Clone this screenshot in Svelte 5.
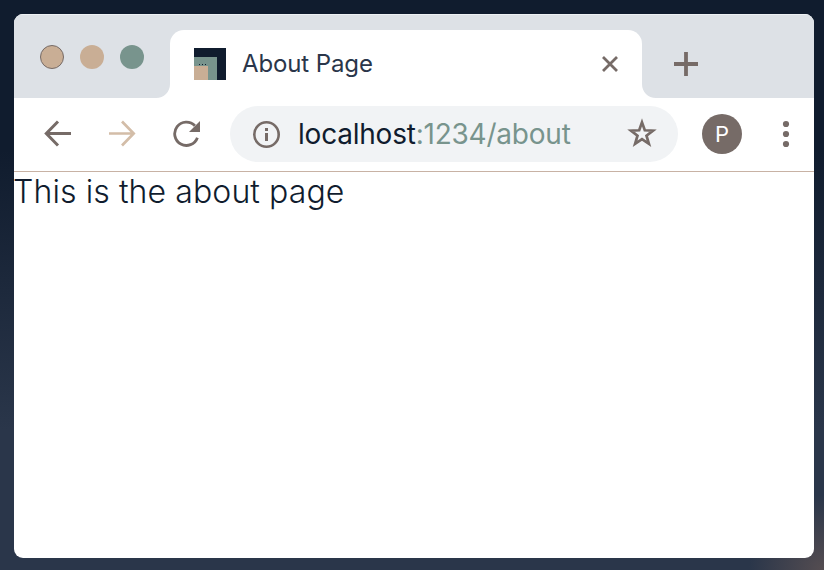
<script>
  const lights = ['close', 'minimize', 'zoom'];
</script>

<main class="desktop">
  <section class="window">
    <header class="strip">
      <div class="lights">
        {#each lights as light}
          <span class="light {light}"></span>
        {/each}
      </div>
      <div class="tab">
        <svg class="curve" width="14" height="14" viewBox="0 0 14 14"><path d="M14 0v14H0C8 14 14 8 14 0z" fill="#fff" /></svg>
        <svg class="favicon" width="32" height="32" viewBox="0 0 32 32" shape-rendering="crispEdges">
          <path d="M0 0h32v32H0z" fill="#101c2e" />
          <path d="M0 9h23v23H0z" fill="#78948d" />
          <path d="M0 18h14v14H0z" fill="#c9ae95" />
          <path d="M5 16h1v1H5zM8 16h1v1H8zM11 16h1v1h-1z" fill="#101c2e" />
        </svg>
        <span class="title">About Page</span>
        <svg class="close-tab" width="18" height="18" viewBox="0 0 18 18"><path d="M2 2l14 14M16 2L2 16" fill="none" stroke="#766b67" stroke-width="2.8" /></svg>
        <svg class="curve right" width="14" height="14" viewBox="0 0 14 14"><path d="M0 0v14h14C6 14 0 8 0 0z" fill="#fff" /></svg>
      </div>
      <svg class="plus" width="24" height="24" viewBox="0 0 24 24"><path d="M12 0v24M0 12h24" fill="none" stroke="#766b67" stroke-width="3.8" /></svg>
    </header>

    <nav class="toolbar">
      <svg class="back" width="28" height="28" viewBox="0 0 28 28"><path d="M27 13.500H3M14 1.500L2.300 13.500L14 25.500" fill="none" stroke="#766b67" stroke-width="3" /></svg>
      <svg class="forward" width="28" height="28" viewBox="0 0 28 28"><path d="M1 13.500h24M14 1.500l11.700 12L14 25.500" fill="none" stroke="#d3bda8" stroke-width="2.700" /></svg>
      <svg class="reload" width="28" height="28" viewBox="0 0 28 28">
        <path d="M22.900 5.700A11.700 11.700 0 1 0 25.400 17.700" fill="none" stroke="#766b67" stroke-width="2.800" />
        <path d="M28 1v11H17z" fill="#766b67" />
      </svg>
      <div class="address">
        <svg class="info" width="28" height="28" viewBox="0 0 28 28">
          <circle cx="14.500" cy="14.500" r="12.200" fill="none" stroke="#766b67" stroke-width="2.600" />
          <path d="M13 8h3v3h-3zM13 13h3v8h-3z" fill="#766b67" />
        </svg>
        <span class="url">localhost<span class="path">:1234/about</span></span>
        <svg class="star" width="32" height="32" viewBox="0 0 32 32"><path d="M16 4.400L18.800 12.300L27 12.600L20.500 17.700L22.900 25.800L16 21.200L9.100 25.800L11.500 17.700L5 12.600L13.200 12.300z" fill="none" stroke="#766b67" stroke-width="2.700" /></svg>
      </div>
      <span class="avatar">P</span>
      <svg class="menu" width="8" height="28" viewBox="0 0 8 28" fill="#766b67"><circle cx="4" cy="4" r="3.100" /><circle cx="4" cy="14" r="3.100" /><circle cx="4" cy="24" r="3.100" /></svg>
    </nav>
    <article class="page">This is the about page</article>
  </section>
</main>

<style>
  .desktop {
    box-sizing: border-box;
    width: 824px;
    height: 570px;
    padding: 14px 10px 12px 14px;
    overflow: hidden;
    background:
      radial-gradient(circle at 824px 570px, #554d51 0, #554d5100 75px),
      linear-gradient(#101c2e 0, #101c2e 150px, #2a364a 430px, #2a364a 100%);
    font-family: Inter, 'Liberation Sans', sans-serif;
    color: #101c2e;
  }
  svg { display: block; flex: none; }
  .window {
    height: 544px;
    border-radius: 9px;
    overflow: hidden;
    background: #fff;
  }
  .strip {
    box-sizing: border-box;
    display: flex;
    height: 84px;
    padding-top: 15px;
    background: #dde1e6;
    border-top: 1px solid #eef1f4;
  }
  .lights {
    display: flex;
    gap: 16px;
    width: 130px;
    padding: 15px 0 0 26px;
  }
  .light {
    width: 24px;
    height: 24px;
    border-radius: 50%;
    background: #c9ae95;
  }
  .light.close { box-sizing: border-box; border: 1px solid #766b67; }
  .light.zoom { background: #78948d; }
  .tab {
    box-sizing: border-box;
    position: relative;
    display: flex;
    align-items: center;
    width: 472px;
    height: 68px;
    padding: 0 23px 0 24px;
    border-radius: 14px 14px 0 0;
    background: #fff;
  }
  .curve { position: absolute; left: -14px; bottom: 0; }
  .curve.right { left: auto; right: -14px; }
  .title {
    flex: 1;
    padding-left: 16px;
    font-size: 24px;
    line-height: 30px;
    letter-spacing: -0.12px;
    color: #2a364a;
  }
  .plus { margin: 22px 0 0 32px; }
  .toolbar {
    box-sizing: border-box;
    display: flex;
    align-items: center;
    height: 74px;
    padding: 0 24px 2px 30px;
    border-bottom: 1px solid #c8b2a4;
  }
  .forward, .reload { margin-left: 36px; }
  .address {
    box-sizing: border-box;
    display: flex;
    align-items: center;
    width: 448px;
    height: 56px;
    margin-left: 30px;
    padding: 0 20px 0 22px;
    border-radius: 28px;
    background: #f1f3f5;
  }
  .url {
    flex: 1;
    padding: 1px 0 0 18px;
    font-size: 28px;
    line-height: 36px;
    letter-spacing: -0.22px;
    white-space: nowrap;
  }
  .path { color: #78948d; }
  .avatar {
    width: 40px;
    height: 40px;
    margin: 0 40px 0 24px;
    border-radius: 50%;
    background: #766b67;
    color: #fff;
    font-size: 22px;
    line-height: 40px;
    text-align: center;
  }
  .page {
    font-size: 32px;
    font-weight: 300;
    line-height: 39px;
    letter-spacing: 0.1px;
    text-indent: -1px;
    white-space: nowrap;
  }
</style>
